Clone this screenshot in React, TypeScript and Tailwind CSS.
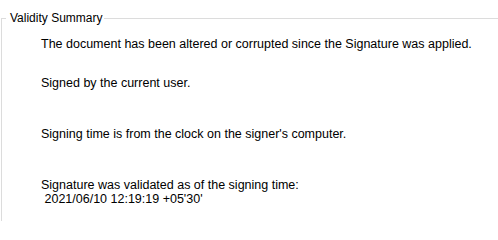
import React from "react";

const App = () => {
  return (
    <div
      className="w-[498px] h-[221px] overflow-hidden bg-white text-black"
      style={{ fontFamily: '"Liberation Sans", Arial, sans-serif' }}>
      <fieldset className="ml-[1px] mt-[11px] w-[520px] h-[260px] border-t border-l border-[#dcdcdc] px-0">
        <legend className="ml-[4px] pl-[4px] pr-[2px] text-[12px] leading-[14px]">Validity Summary</legend>
        <div className="pl-[39px] text-[12.5px] leading-[14px]">
          <p className="mt-[12px]">The document has been altered or corrupted since the Signature was applied.</p>
          <p className="mt-[25px]">Signed by the current user.</p>
          <p className="mt-[37px]">Signing time is from the clock on the signer's computer.</p>
          <p className="mt-[37px]">Signature was validated as of the signing time:</p>
          <p className="whitespace-pre">{" 2021/06/10 12:19:19 +05'30'"}</p>
        </div>
      </fieldset>
    </div>
  );
};

export default App;
